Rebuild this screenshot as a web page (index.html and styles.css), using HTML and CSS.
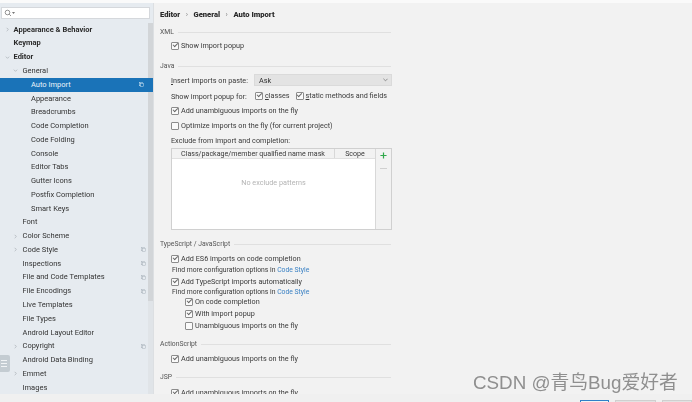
FILE: index.html
```html
<!DOCTYPE html>
<html lang="en">
<head>
<meta charset="utf-8">
<title>Auto Import</title>
<link rel="stylesheet" href="styles.css">
</head>
<body>
<div class="window">
  <aside class="sidebar">
    <div class="search"><svg class="search-icon" viewBox="0 0 12 8"><circle cx="3.5" cy="3.5" r="2.3"/><path d="M5.2 5.2L7 7"/><path class="caret" d="M8 3h3L9.500 5z"/></svg></div>
    <div class="tree-wrap">
      <ul class="tree">
        <li class="top bold"><svg class="arrow" viewBox="0 0 6 6"><path d="M2 1l2 2-2 2"/></svg>Appearance &amp; Behavior</li>
        <li class="top bold">Keymap</li>
        <li class="top bold"><svg class="arrow" viewBox="0 0 6 6"><path d="M1 2l2 2 2-2"/></svg>Editor</li>
        <li class="l1"><svg class="arrow" viewBox="0 0 6 6"><path d="M1 2l2 2 2-2"/></svg>General</li>
        <li class="l2 active">Auto Import<svg class="copy" viewBox="0 0 6 6"><rect x="0.500" y="0.500" width="3.500" height="4"/><rect x="2" y="1.500" width="3.500" height="4"/></svg></li>
        <li class="l2">Appearance</li>
        <li class="l2">Breadcrumbs</li>
        <li class="l2">Code Completion</li>
        <li class="l2">Code Folding</li>
        <li class="l2">Console</li>
        <li class="l2">Editor Tabs</li>
        <li class="l2">Gutter Icons</li>
        <li class="l2">Postfix Completion</li>
        <li class="l2">Smart Keys</li>
        <li class="l1">Font</li>
        <li class="l1"><svg class="arrow" viewBox="0 0 6 6"><path d="M2 1l2 2-2 2"/></svg>Color Scheme</li>
        <li class="l1"><svg class="arrow" viewBox="0 0 6 6"><path d="M2 1l2 2-2 2"/></svg>Code Style<svg class="copy" viewBox="0 0 6 6"><rect x="0.500" y="0.500" width="3.500" height="4"/><rect x="2" y="1.500" width="3.500" height="4"/></svg></li>
        <li class="l1">Inspections<svg class="copy" viewBox="0 0 6 6"><rect x="0.500" y="0.500" width="3.500" height="4"/><rect x="2" y="1.500" width="3.500" height="4"/></svg></li>
        <li class="l1">File and Code Templates<svg class="copy" viewBox="0 0 6 6"><rect x="0.500" y="0.500" width="3.500" height="4"/><rect x="2" y="1.500" width="3.500" height="4"/></svg></li>
        <li class="l1">File Encodings<svg class="copy" viewBox="0 0 6 6"><rect x="0.500" y="0.500" width="3.500" height="4"/><rect x="2" y="1.500" width="3.500" height="4"/></svg></li>
        <li class="l1">Live Templates</li>
        <li class="l1">File Types</li>
        <li class="l1">Android Layout Editor</li>
        <li class="l1"><svg class="arrow" viewBox="0 0 6 6"><path d="M2 1l2 2-2 2"/></svg>Copyright<svg class="copy" viewBox="0 0 6 6"><rect x="0.500" y="0.500" width="3.500" height="4"/><rect x="2" y="1.500" width="3.500" height="4"/></svg></li>
        <li class="l1">Android Data Binding</li>
        <li class="l1"><svg class="arrow" viewBox="0 0 6 6"><path d="M2 1l2 2-2 2"/></svg>Emmet</li>
        <li class="l1">Images</li>
      </ul>
      <div class="scrollbar"><div class="thumb"></div></div>
    </div>
    <div class="float-btn"><span></span><span></span><span></span></div>
  </aside>
  <main class="content">
    <div class="crumbs"><b>Editor</b><i>›</i><b>General</b><i>›</i><b>Auto Import</b></div>

    <div class="group-title xml">XML</div>
    <label class="check g1 c-xml"><span class="box on"></span><span>Show import popup</span></label>

    <div class="group-title java">Java</div>
    <div class="row paste"><span class="paste-label"><u>I</u>nsert imports on paste:</span><div class="select">Ask<svg viewBox="0 0 6 4"><path d="M.5.500L3 3 5.500.500"/></svg></div></div>
    <div class="row popup"><span class="popup-label">Show import popup for:</span><label class="check"><span class="box on"></span><span><u>c</u>lasses</span></label><label class="check"><span class="box on"></span><span><u>s</u>tatic methods and fields</span></label></div>
    <label class="check g1 unamb"><span class="box on"></span><span>Add unambiguous imports on the fly</span></label>
    <label class="check g1 opt"><span class="box"></span><span>Optimize imports on the fly (for current project)</span></label>
    <div class="exclude-label">Exclude from import and completion:</div>
    <div class="table">
      <div class="table-main">
        <div class="thead"><div class="col-a">Class/package/member qualified name mask</div><div class="col-b">Scope</div></div>
        <div class="empty">No exclude patterns</div>
      </div>
      <div class="tools"><svg class="plus" viewBox="0 0 8 8"><path d="M4 .5v7M.5 4h7"/></svg><div class="minus"></div></div>
    </div>

    <div class="group-title ts">TypeScript / JavaScript</div>
    <label class="check g1 c-es6"><span class="box on"></span><span>Add ES6 imports on code completion</span></label>
    <div class="note n1">Find more configuration options in <a>Code Style</a></div>
    <label class="check g1 c-ts"><span class="box on"></span><span>Add TypeScript imports automatically</span></label>
    <div class="note n2">Find more configuration options in <a>Code Style</a></div>
    <label class="check g2"><span class="box on"></span><span>On code completion</span></label>
    <label class="check g2"><span class="box on"></span><span>With import popup</span></label>
    <label class="check g2"><span class="box"></span><span>Unambiguous imports on the fly</span></label>

    <div class="group-title as">ActionScript</div>
    <label class="check g1 c-as"><span class="box on"></span><span>Add unambiguous imports on the fly</span></label>
    <div class="group-title jsp">JSP</div>
    <label class="check g1 c-jsp"><span class="box on"></span><span>Add unambiguous imports on the fly</span></label>
  </main>
</div>
<div class="footer"><div class="btn primary"></div><div class="btn second"></div><div class="btn third"></div></div>
<div class="watermark">CSDN @青鸟Bug爱好者</div>
</body>
</html>
```
FILE: styles.css
```css
html, body { margin: 0; padding: 0; }
body {
  width: 692px; height: 402px; overflow: hidden; position: relative;
  background: #f2f2f2;
  font-family: Roboto, "Noto Sans", "Noto Sans CJK SC", sans-serif;
  font-size: 7.5px; color: #333;
}
.window { display: flex; height: 394px; border-top: 3px solid #fafafa; box-sizing: border-box; background: #f2f2f2; }
.sidebar { width: 154px; flex: none; background: #e6ebf0; position: relative; display: flex; flex-direction: column; border-right: 1px solid #dcdfe2; box-sizing: border-box; filter: blur(.3px); }
.search { height: 12px; margin: 4px 3px 0 1px; background: #fff; border: 1px solid #d5d8dc; box-sizing: border-box; display: flex; align-items: center; padding-left: 2px; flex: none; }
.search-icon { width: 12px; height: 8px; fill: none; stroke: #777; stroke-width: .8; }
.search-icon .caret { fill: #777; stroke: none; }
.tree-wrap { flex: 1; display: flex; min-height: 0; margin-top: 3.7px; }
.tree { list-style: none; margin: 0; padding: 0; flex: 1; will-change: opacity; position: relative; z-index: 1; }
.tree li { height: 13.77px; line-height: 13.77px; position: relative; white-space: nowrap; }
.tree .top { padding-left: 13.5px; }
.tree .bold { font-weight: 700; color: #2b2b2b; }
.tree .l1 { padding-left: 22.500px; }
.tree .l2 { padding-left: 31px; }
.tree .active { background: #1a73b8; color: #eaf3fa; margin-right: -5px; }
.arrow { position: absolute; width: 5px; height: 5px; top: 4.500px; fill: none; stroke: #99a0a6; stroke-width: .7; margin-left: -9px; }
.l1 .arrow { margin-left: -10px; }
.copy { position: absolute; right: 2px; top: 4.500px; width: 5px; height: 5px; fill: #e6ebf0; stroke: #a8b2ba; stroke-width: .6; }
.active .copy { right: 9px; fill: #1a73b8; stroke: #cfe3f2; }
.scrollbar { width: 5px; background: #e0e4e8; flex: none; }
.thumb { height: 278px; background: #d2d5d8; }
.float-btn { position: absolute; left: 0; top: 352px; width: 10px; height: 17px; background: #c4ccd2; border-radius: 0 2px 2px 0; display: flex; flex-direction: column; justify-content: center; gap: 2px; padding-left: 1px; box-sizing: border-box; z-index: 2; }
.float-btn span { width: 6px; height: 1px; background: #f2f4f6; }

.content { flex: 1; padding: 0 0 0 6px; overflow: hidden; color: #3a3a3a; filter: blur(.3px); position: relative; font-size: 7.25px; }
.crumbs { padding: 7px 0 0 0; height: 24px; box-sizing: border-box; font-weight: 700; line-height: 9px; color: #2b2b2b; font-size: 7.6px; }
.crumbs i { font-style: normal; color: #888; margin: 0 5.500px; font-weight: 400; }
.group-title { width: 231px; display: flex; align-items: center; gap: 4px; font-size: 6.8px; color: #555; height: 10px; line-height: 10px; }
.group-title::after { content: ""; flex: 1; height: 1px; background: #e0e0e0; }
.check { display: flex; align-items: center; gap: 2px; height: 12px; line-height: 12px; white-space: nowrap; }
.box { width: 6px; height: 6px; border: 1px solid #8c8c8c; border-radius: 1px; background: #fafafa; flex: none; position: relative; }
.box.on::after { content: ""; position: absolute; left: .8px; top: 0; width: 3.6px; height: 2.2px; border-left: 1px solid #666; border-bottom: 1px solid #666; transform: rotate(-45deg); }
.g1 { margin-left: 11px; }
.g2 { margin-left: 25px; }
.c-xml { margin-top: 3px; }
.java { margin-top: 9px; }
.row { display: flex; align-items: center; margin-left: 11px; white-space: nowrap; }
.paste { margin-top: 2.5px; height: 13px; }
.paste-label { width: 83px; flex: none; }
.select { width: 137.5px; height: 12px; background: #e3e3e3; border: 1px solid #dadada; box-sizing: border-box; display: flex; align-items: center; justify-content: space-between; padding: 0 3px 0 4px; color: #2f2f2f; }
.select svg { width: 5px; height: 4px; fill: none; stroke: #666; stroke-width: .8; }
.popup { margin-top: 3.5px; height: 12px; gap: 6px; }
.popup-label { width: 73px; flex: none; margin-right: 5px; }
.unamb { margin-top: 2px; height: 14px; }
.opt { margin-top: 1px; height: 14px; }
.exclude-label { margin: 1px 0 0 11px; height: 14px; line-height: 14px; }
.table { display: flex; width: 221px; height: 82px; margin: 0 0 0 11px; border: 1px solid #d0d0d0; box-sizing: border-box; background: #fff; }
.table-main { flex: 1; display: flex; flex-direction: column; }
.thead { display: flex; height: 9px; line-height: 9px; background: #f2f2f2; border-bottom: 1px solid #e0e0e0; flex: none; text-align: center; font-size: 7.1px; }
.col-a { width: 162px; border-right: 1px solid #d8d8d8; }
.col-b { flex: 1; }
.empty { flex: 1; display: flex; align-items: flex-start; justify-content: center; padding-top: 19px; color: #b4b4b4; }
.tools { width: 15px; background: #f2f2f2; border-left: 1px solid #d8d8d8; flex: none; display: flex; flex-direction: column; align-items: center; }
.plus { width: 7px; height: 7px; margin-top: 3px; fill: none; stroke: #2fa84a; stroke-width: 1.4; }
.minus { width: 7px; height: 1px; background: #d0d0d0; margin-top: 9px; }
.ts { margin-top: 9px; }
.c-es6 { margin-top: 4px; }
.note { margin-left: 12px; font-size: 6.8px; height: 9px; line-height: 9px; }
.note a { color: #3b82c4; }
.n1 { margin-top: .5px; }
.c-ts { margin-top: 1.5px; }
.n2 { margin-top: -.5px; margin-bottom: -.5px; }
.as { margin-top: 7px; }
.c-as { margin-top: 4px; }
.jsp { margin-top: 7px; }
.c-jsp { margin-top: 5px; }

.footer { height: 8px; display: flex; justify-content: flex-end; align-items: flex-start; gap: 6px; padding: 6px 0 0; box-sizing: border-box; background: #f0f0f0; }
.btn { width: 41px; height: 2px; background: #e2e2e2; border: 1px solid #cfcfcf; border-bottom: 0; box-sizing: border-box; }
.btn.primary { width: 29px; border-color: #2f80c8; background: #f2f2f2; }
.btn.third { width: 30px; }
.watermark { position: absolute; left: 473px; top: 373px; font-family: "Liberation Sans", "Noto Sans CJK SC", sans-serif; font-size: 18.8px; line-height: 20px; color: #8f8f8f; white-space: nowrap; }
```
